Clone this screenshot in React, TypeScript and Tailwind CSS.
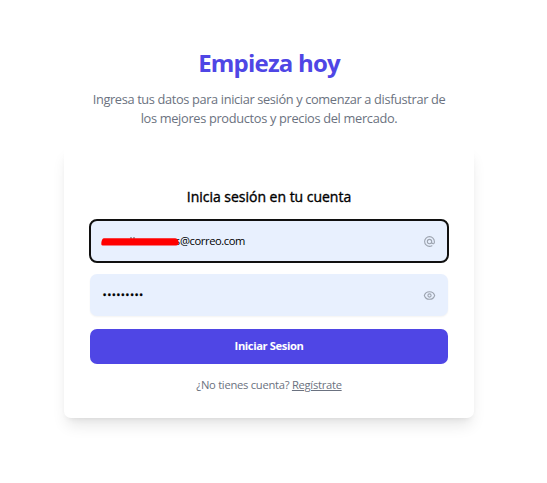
import type { ReactNode } from "react";

function Field({ focused, icon, children }: { focused?: boolean; icon: ReactNode; children: ReactNode }) {
  return (
    <div
      className={`flex h-[42px] items-center justify-between rounded-[7px] bg-[#e8f0fe] pl-[12px] pr-[12px] text-[11.2px] text-black ${
        focused ? "outline-2 -outline-offset-1 outline-[#101010]" : "shadow-[0_1px_2px_0_rgba(0,0,0,0.05)]"
      }`}
    >
      {children}
      <svg className="size-[13px] text-[#9ca3af]" viewBox="0 0 24 24" fill="none" stroke="currentColor" strokeWidth="2" strokeLinecap="round" strokeLinejoin="round">
        {icon}
      </svg>
    </div>
  );
}

export default function App() {
  return (
    <main className="h-[483px] w-[547px] overflow-hidden bg-white font-['Open_Sans','Noto_Sans',sans-serif]">
      <div className="ml-[64px] w-[410px] pt-[47px]">
        <h1 className="text-center text-[24px] leading-[32px] font-bold tracking-[-0.8px] whitespace-nowrap text-[#4f46e5]">Empieza hoy</h1>
        <p className="mt-[11px] text-center text-[12.8px] leading-[19px] tracking-[-0.36px] whitespace-nowrap text-[#6b7280]">
          Ingresa tus datos para iniciar sesión y comenzar a disfustrar de
          <br />
          <span className="tracking-[-0.32px]">los mejores productos y precios del mercado.</span>
        </p>
        <form className="mt-[18px] flex h-[272px] flex-col rounded-[7px] px-[26px] pt-[40px] shadow-lg">
          <p className="text-center text-[14px] leading-[22px] font-medium tracking-[-0.02px] whitespace-nowrap text-black [-webkit-text-stroke:0.35px_black]">
            Inicia sesión en tu cuenta
          </p>
          <div className="mt-[12px]">
            <Field
              focused
              icon={<path d="M16 12a4 4 0 10-8 0 4 4 0 008 0zm0 0v1.5a2.5 2.5 0 005 0V12a9 9 0 10-9 9m4.5-1.206a8.959 8.959 0 01-4.5 1.207" />}
            >
              <span className="relative flex whitespace-nowrap">
                <span className="w-[78px] text-right">s</span>
                <span className="tracking-[-0.42px]">@correo.com</span>
                <svg className="absolute top-[4px] left-[-1px] h-[9px] w-[79px]" viewBox="0 0 79 9">
                  <path d="M30 0v2M33 0v2" stroke="#555" />
                  <path d="M3 1.3H74Q77 1.3 77.6 5Q78 8.6 75 8.6H1.5Q0 8.6 0.3 6Q0.8 1.3 3 1.3Z" fill="#ff0000" />
                </svg>
              </span>
            </Field>
          </div>
          <div className="mt-[12px]">
            <Field
              icon={
                <>
                  <path d="M15 12a3 3 0 11-6 0 3 3 0 016 0z" />
                  <path d="M2.458 12C3.732 7.943 7.523 5 12 5c4.478 0 8.268 2.943 9.542 7-1.274 4.057-5.064 7-9.542 7-4.477 0-8.268-2.943-9.542-7z" />
                </>
              }
            >
              <span className="pl-[0.6px] tracking-[0.35px] [-webkit-text-stroke:0.3px_black]">•••••••••</span>
            </Field>
          </div>
          <button type="button" className="mt-[13px] h-[35px] shrink-0 rounded-[7px] bg-[#4f46e5] text-[11.2px] font-bold tracking-[-0.4px] text-white">
            Iniciar Sesion
          </button>
          <p className="mt-[13px] text-center text-[11.2px] leading-[16px] tracking-[-0.27px] whitespace-nowrap text-[#6b7280]">
            ¿No tienes cuenta? <a className="underline">Regístrate</a>
          </p>
        </form>
      </div>
    </main>
  );
}
